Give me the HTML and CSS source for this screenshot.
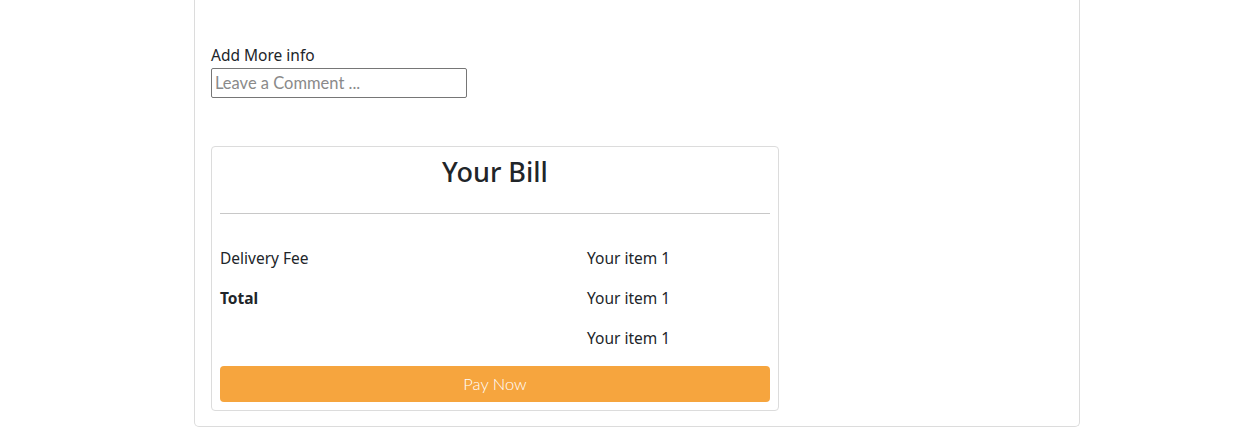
FILE: index.html
```html
<!DOCTYPE html>
<html>
<head>
<meta charset="utf-8">
<link rel="stylesheet" href="styles.css">
</head>
<body>
<div class="page">
  <div class="panel">
    <div class="info">
      <label class="info-label" for="comment">Add More info</label>
      <input id="comment" class="info-input" type="text" placeholder="Leave a Comment ...">
    </div>
    <div class="bill">
      <h2 class="bill-title">Your Bill</h2>
      <hr class="bill-rule">
      <div class="bill-rows">
        <div class="bill-name">Delivery Fee</div>
        <div class="bill-value">Your item 1</div>
        <div class="bill-name bold">Total</div>
        <div class="bill-value">Your item 1</div>
        <div class="bill-name"></div>
        <div class="bill-value">Your item 1</div>
      </div>
      <button class="pay">Pay Now</button>
    </div>
  </div>
</div>
</body>
</html>
```
FILE: styles.css
```css
* { box-sizing: border-box; }
html, body { margin: 0; padding: 0; background: #fff; }
body {
  font-family: "Noto Sans", "Open Sans", sans-serif;
  color: #212529;
  font-size: 16px;
}
.page {
  height: 427px;
  overflow: hidden;
}
.panel {
  margin-left: 194px;
  width: 886px;
  margin-top: -20px;
  height: 447px;
  border: 1px solid #dcdcdc;
  border-top: none;
  border-radius: 0 0 5px 5px;
  padding: 66px 16px 0 16px;
}
.info {
  display: flex;
  flex-direction: column;
  align-items: flex-start;
}
.info-label {
  font-size: 15.5px;
  line-height: 22px;
  height: 22px;
  margin-top: -2px;
  margin-bottom: 2px;
}
.info-input {
  width: 256px;
  height: 30px;
  border: 1px solid #767676;
  border-radius: 2px;
  padding: 0 3px;
  font-family: "Lato", sans-serif;
  font-size: 16.5px;
  color: #333;
  outline: none;
}
.info-input::placeholder { color: #8a8a8a; }
.bill {
  margin-top: 48px;
  width: 568px;
  height: 265px;
  border: 1px solid #dcdcdc;
  border-radius: 4px;
  padding: 8px 8px;
  display: flex;
  flex-direction: column;
}
.bill-title {
  margin: -1px 0 0 0;
  text-align: center;
  font-size: 27px;
  font-weight: 500;
  line-height: 36px;
}
.bill-rule {
  margin: 23px 0 0 0;
  border: none;
  border-top: 1px solid #c8c8c8;
  height: 0;
}
.bill-rows {
  display: grid;
  grid-template-columns: 367px 1fr;
  grid-auto-rows: 40px;
  margin-top: 24px;
  font-size: 15.5px;
  align-items: center;
}
.bold { font-weight: 700; }
.pay {
  margin-top: 8px;
  height: 36px;
  width: 100%;
  border: none;
  border-radius: 4px;
  background: #f6a53e;
  color: #fff;
  font-family: "Lato", sans-serif;
  font-size: 16.5px;
  font-weight: 300;
}
```
